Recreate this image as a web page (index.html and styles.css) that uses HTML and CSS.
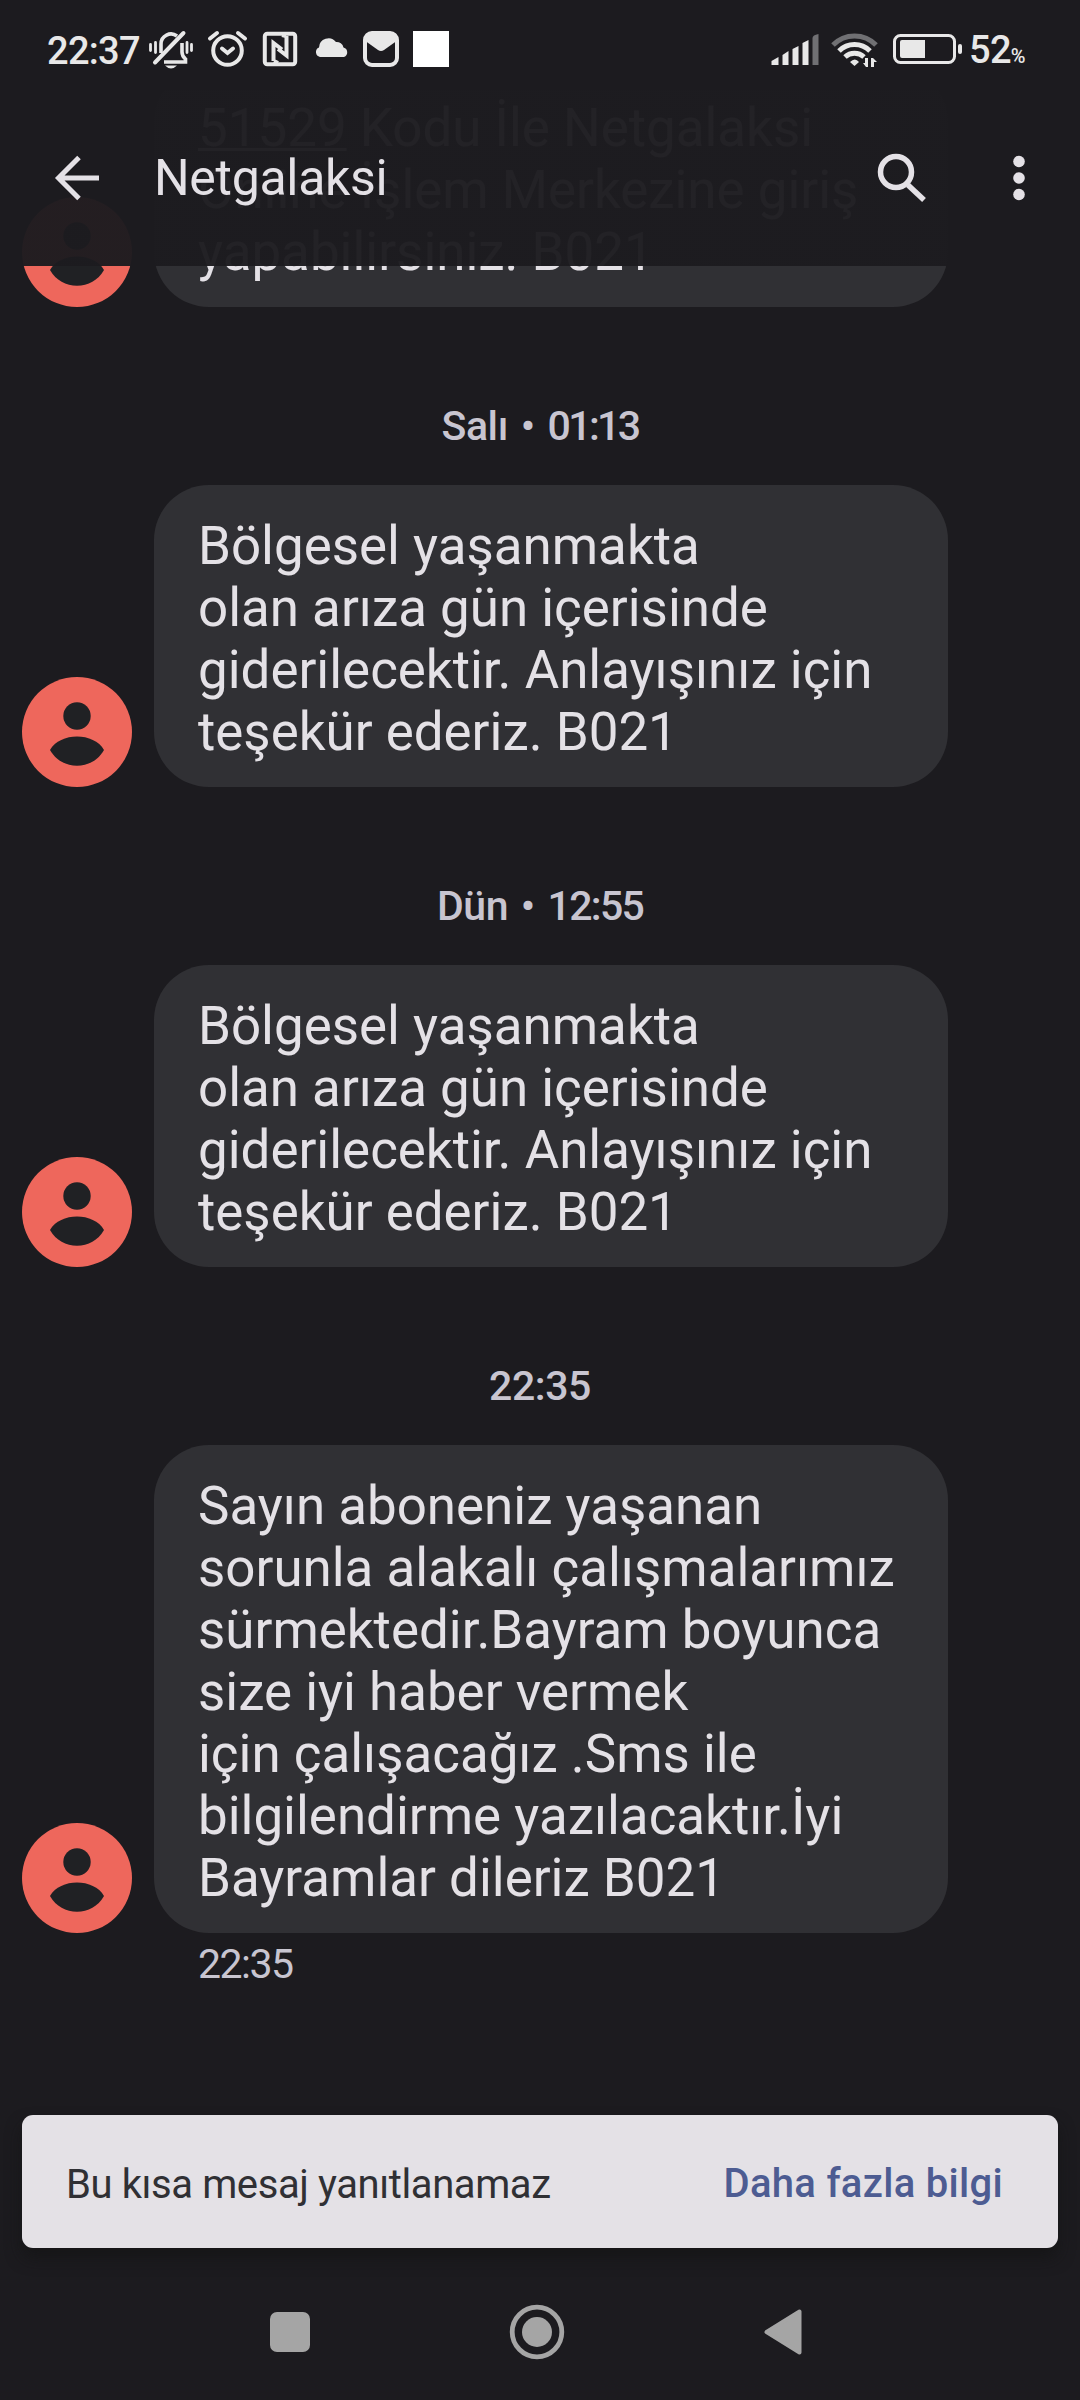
FILE: index.html
```html
<!DOCTYPE html>
<html lang="tr">
<head>
<meta charset="utf-8">
<title>Netgalaksi</title>
<link rel="stylesheet" href="styles.css">
</head>
<body>
<svg class="defs" width="0" height="0" aria-hidden="true">
  <symbol id="avatar" viewBox="0 0 110 110">
    <circle cx="55" cy="55" r="55" fill="#ee675c"/>
    <circle cx="55" cy="39" r="13.7" fill="#202124"/>
    <path d="M28 73C33 64 44 59.500 55 59.500S77 64 82 73C76 83.500 66 88.700 55 88.700S34 83.500 28 73Z" fill="#202124"/>
  </symbol>
</svg>
<div class="screen">
  <header class="top">
    <div class="status">
      <span class="clock">22:37</span>
      <svg class="status-left" width="304" height="44" viewBox="146 26 304 44" fill="none" stroke="#e8e8e8">
        <g stroke-width="3.600">
          <path d="M161 53V44a10 10 0 0 1 16-8M182 43v9q0 4 3.500 7v3H164" />
          <path d="M155 62.500L183.500 33" stroke-width="4" stroke-linecap="round"/>
          <path d="M150.500 44.500v6M155.500 42.500v10M187 42.500v10M191.500 44.500v6" stroke-width="2.800" stroke-linecap="round"/>
          <path d="M165 65.500h12q-6 6-12 0z" fill="#e8e8e8" stroke="none"/>
        </g>
        <circle cx="227.500" cy="50.500" r="14.300" stroke-width="4"/>
        <path d="M222 48.500l5.500 4.500 5.500-4.500M210 38.500l7-5.500M245 38.500l-7-5.500" stroke-width="4" stroke-linecap="round"/>
        <rect x="264.800" y="33.800" width="30.400" height="30.400" rx="2.500" stroke-width="4"/>
        <path d="M273.500 61V43l8.500 6.500M274 61l4 2M286.500 36v19.500l-8.500-6.500M286 36l-4-1" stroke-width="4"/>
        <path d="M320 57a5 5 0 0 1-1-9.500 9.500 9.500 0 0 1 17-5.500 7 7 0 0 1 7.500 5.500 5 5 0 0 1 .5 9.500z" fill="#e8e8e8" stroke="none"/>
        <rect x="365" y="33" width="32" height="32" rx="7" stroke-width="4"/>
        <path d="M364 40v-2q2-6 8-6h18q6 0 8 6v2l-14 10q-3 2-6 0z" fill="#e8e8e8" stroke="none"/>
        <path d="M413 31h36v36h-36z" fill="#fff" stroke="none"/>
      </svg>
      <svg class="status-right" width="196" height="40" viewBox="768 30 196 40" fill="#e8e8e8">
        <path d="M771.500 65v-4l7-4v8zM782.500 65V55l6-4v14zM792.500 65V49l6-3v19zM802.500 65V43l6-3v25z"/>
        <path d="M812.500 65V38q0-3 6-4v31z" fill="#707073"/>
        <g fill="none" stroke="#e8e8e8" stroke-width="5">
          <path d="M833 45a30 30 0 0 1 43 0" stroke="#707073"/>
          <path d="M839 51a22 22 0 0 1 31 0M845 57a14 14 0 0 1 19 0"/>
        </g>
        <path d="M850 62q5-5 9 0l-4.500 4z"/>
        <path d="M868 58v9h-2l-3-4h2v-5zM871 67v-9h2l4 4h-3v5z"/>
        <rect x="894.500" y="35.500" width="60" height="27" rx="6" fill="none" stroke="#e8e8e8" stroke-width="3"/>
        <path d="M902 40h23v18h-23q-2 0-2-2V42q0-2 2-2z"/>
        <rect x="958" y="44" width="4" height="10" rx="2"/>
      </svg>
      <span class="battery">52<small>%</small></span>
    </div>
    <div class="bar">
      <svg class="back" width="46" height="46" viewBox="54 155 46 46" fill="none" stroke="#e4e1e6" stroke-width="5"><path d="M99 178H59M79 157.500L58.500 178 79 198.500"/></svg>
      <h1 class="title">Netgalaksi</h1>
      <svg class="search" width="52" height="52" viewBox="876 151 52 52" fill="none" stroke="#e4e1e6"><circle cx="896" cy="171" r="15.500" stroke-width="5.500"/><path d="M908 184L924 199" stroke-width="5.500"/></svg>
      <svg class="more" width="14" height="46" viewBox="0 0 14 46" fill="#e4e1e6"><circle cx="7" cy="6.500" r="5.800"/><circle cx="7" cy="23" r="5.800"/><circle cx="7" cy="39.500" r="5.800"/></svg>
    </div>
  </header>
  <main class="thread">
    <div class="message">
      <svg class="avatar"><use href="#avatar"/></svg>
      <p class="bubble"><u>51529</u> Kodu İle Netgalaksi<br>Online İşlem Merkezine giriş<br>yapabilirsiniz. B021</p>
    </div>
    <div class="stamp">Salı • <span class="time narrow">01:13</span></div>
    <div class="message">
      <svg class="avatar"><use href="#avatar"/></svg>
      <p class="bubble">Bölgesel yaşanmakta<br>olan arıza gün içerisinde<br>giderilecektir. Anlayışınız için<br>teşekür ederiz. B021</p>
    </div>
    <div class="stamp">Dün • <span class="time">12:55</span></div>
    <div class="message">
      <svg class="avatar"><use href="#avatar"/></svg>
      <p class="bubble">Bölgesel yaşanmakta<br>olan arıza gün içerisinde<br>giderilecektir. Anlayışınız için<br>teşekür ederiz. B021</p>
    </div>
    <div class="stamp">22:35</div>
    <div class="message">
      <svg class="avatar"><use href="#avatar"/></svg>
      <p class="bubble">Sayın aboneniz yaşanan<br>sorunla alakalı çalışmalarımız<br>sürmektedir.Bayram boyunca<br>size iyi haber vermek<br>için çalışacağız .Sms ile<br>bilgilendirme yazılacaktır.İyi<br>Bayramlar dileriz B021</p>
    </div>
    <div class="sent">22:35</div>
  </main>
  <footer class="bottom">
    <div class="snackbar">
      <span class="notice">Bu kısa mesaj yanıtlanamaz</span>
      <a class="learn">Daha fazla bilgi</a>
    </div>
    <nav class="nav">
      <svg width="40" height="40" viewBox="0 0 40 40"><rect width="40" height="40" rx="7" fill="#a5a5a5"/></svg>
      <svg width="56" height="56" viewBox="0 0 56 56"><circle cx="28" cy="28" r="24.800" fill="none" stroke="#a5a5a5" stroke-width="4.800"/><circle cx="28" cy="28" r="15" fill="#a5a5a5"/></svg>
      <svg width="38" height="46" viewBox="0 0 38 46"><path d="M2.500 23L35.500 2.500v41z" fill="#a5a5a5" stroke="#a5a5a5" stroke-width="4" stroke-linejoin="round"/></svg>
    </nav>
  </footer>
</div>
</body>
</html>
```
FILE: styles.css
```css
body { margin: 0; background: #1c1b1f; }
.defs { display: block; }
.screen {
  position: relative;
  display: flex;
  flex-direction: column;
  width: 1080px;
  height: 2400px;
  overflow: hidden;
  background: #1c1b1f;
  color: #e4e1e6;
  font-family: Roboto, sans-serif;
}
.top {
  position: absolute;
  inset: 0 0 auto;
  z-index: 1;
  height: 266px;
  background: linear-gradient(#1c1b1f 90px, rgba(28, 27, 31, 0.965) 90px);
}
.status {
  display: flex;
  align-items: center;
  height: 90px;
  padding: 0 54px 0 47px;
  color: #e8e8e8;
}
.clock { width: 99px; padding-top: 11px; font-size: 38px; font-weight: 500; line-height: 50px; letter-spacing: -0.7px; white-space: nowrap; }
.status-left { margin-top: 6px; }
.status-right { margin: 10px 5px 0 auto; }
.battery { padding-top: 15px; font-size: 38px; font-weight: 500; line-height: 50px; letter-spacing: -0.7px; width: 57px; white-space: nowrap; }
.battery small { font-size: 20px; }
.bar { display: flex; align-items: center; height: 176px; padding-left: 54px; }
.title { flex: none; width: 722px; margin: 0 0 0 54px; font-size: 50px; font-weight: 400; line-height: 60px; letter-spacing: -0.3px; }
.more { margin-left: 84px; }
.thread { padding-top: 67px; }
.message { display: flex; align-items: flex-end; gap: 22px; padding-left: 22px; }
.avatar { flex: none; width: 110px; height: 110px; }
.bubble {
  box-sizing: border-box;
  width: 794px;
  margin: 0;
  padding: 30px 0 24px 44px;
  border-radius: 55px;
  background: #303034;
  font-size: 52.9px;
  line-height: 62px;
  white-space: nowrap;
}
.bubble u { text-decoration-thickness: 3px; }
.stamp {
  height: 60px;
  padding: 89px 0 29px;
  color: #c8c5d0;
  font-size: 41px;
  font-weight: 500;
  line-height: 60px;
  letter-spacing: -0.4px;
  word-spacing: 3px;
  text-align: center;
}
.time { letter-spacing: -1.7px; }
.time.narrow { letter-spacing: -2.6px; }
.sent { padding: 5px 0 0 198px; color: #c8c5d0; font-size: 41px; line-height: 52px; letter-spacing: -1.5px; }
.bottom { margin-top: auto; height: 285px; }
.snackbar {
  display: flex;
  align-items: center;
  justify-content: space-between;
  box-sizing: border-box;
  height: 133px;
  margin: 0 22px;
  padding: 4px 55px 0 44px;
  border-radius: 11px;
  background: #e4e1e6;
  box-shadow: 0 10px 16px rgba(18, 18, 18, 0.6);
  color: #303034;
  font-size: 40px;
}
.notice { padding-top: 2px; letter-spacing: -0.4px; }
.learn { color: #4d5c92; font-weight: 500; letter-spacing: 0.3px; }
.nav { display: grid; grid-template-columns: 40px 56px 38px; align-items: center; column-gap: 199px; height: 168px; padding-left: 270px; }
```
